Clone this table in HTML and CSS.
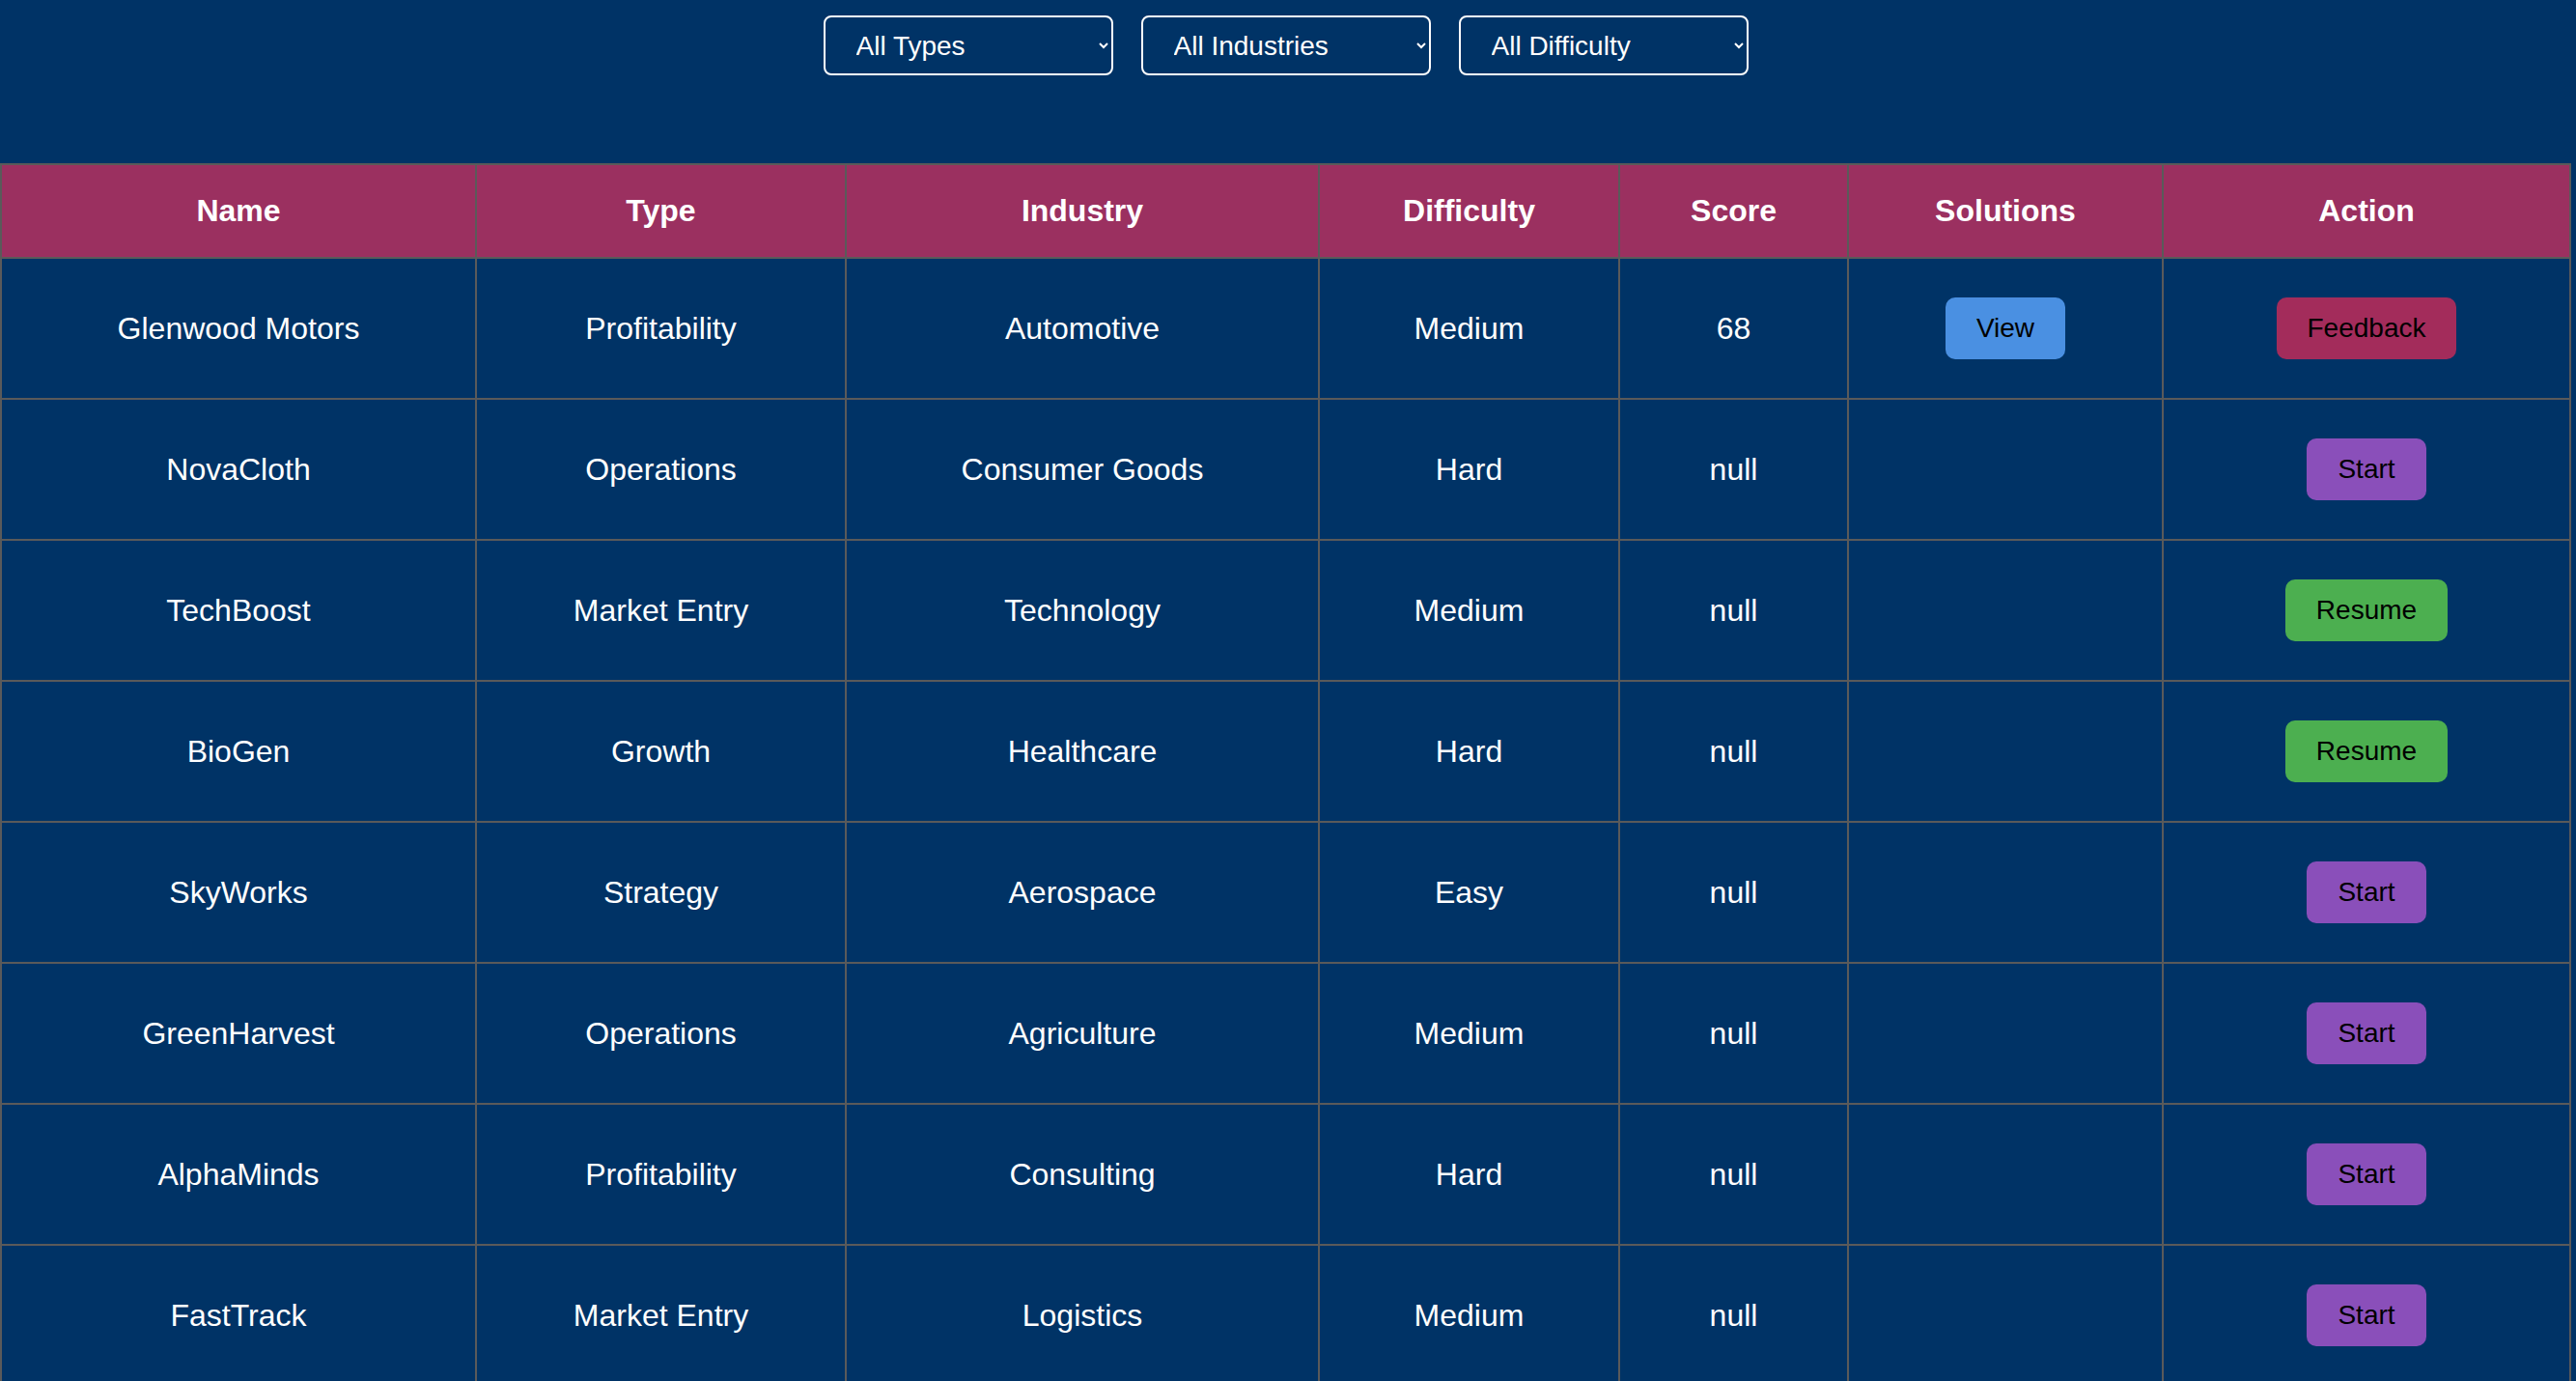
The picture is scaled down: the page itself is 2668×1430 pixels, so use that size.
FILE: index.html
```html
<!DOCTYPE html>
<html lang="en">
<head>
<meta charset="utf-8">
<title>Cases</title>
<link rel="stylesheet" href="styles.css">
</head>
<body>
<div class="page">
  <div class="filters">
    <select class="filter">
      <option>All Types</option>
      <option>Profitability</option>
      <option>Operations</option>
      <option>Market Entry</option>
      <option>Growth</option>
      <option>Strategy</option>
    </select>
    <select class="filter">
      <option>All Industries</option>
      <option>Automotive</option>
      <option>Consumer Goods</option>
      <option>Technology</option>
    </select>
    <select class="filter">
      <option>All Difficulty</option>
      <option>Easy</option>
      <option>Medium</option>
      <option>Hard</option>
    </select>
  </div>

  <table class="cases">
    <colgroup>
      <col class="c-name">
      <col class="c-type">
      <col class="c-industry">
      <col class="c-diff">
      <col class="c-score">
      <col class="c-sol">
      <col class="c-action">
    </colgroup>
    <thead>
      <tr>
        <th>Name</th>
        <th>Type</th>
        <th>Industry</th>
        <th>Difficulty</th>
        <th>Score</th>
        <th>Solutions</th>
        <th>Action</th>
      </tr>
    </thead>
    <tbody>
      <tr>
        <td>Glenwood Motors</td>
        <td>Profitability</td>
        <td>Automotive</td>
        <td>Medium</td>
        <td>68</td>
        <td><button class="btn btn-view">View</button></td>
        <td><button class="btn btn-feedback">Feedback</button></td>
      </tr>
      <tr>
        <td>NovaCloth</td>
        <td>Operations</td>
        <td>Consumer Goods</td>
        <td>Hard</td>
        <td>null</td>
        <td></td>
        <td><button class="btn btn-start">Start</button></td>
      </tr>
      <tr>
        <td>TechBoost</td>
        <td>Market Entry</td>
        <td>Technology</td>
        <td>Medium</td>
        <td>null</td>
        <td></td>
        <td><button class="btn btn-resume">Resume</button></td>
      </tr>
      <tr>
        <td>BioGen</td>
        <td>Growth</td>
        <td>Healthcare</td>
        <td>Hard</td>
        <td>null</td>
        <td></td>
        <td><button class="btn btn-resume">Resume</button></td>
      </tr>
      <tr>
        <td>SkyWorks</td>
        <td>Strategy</td>
        <td>Aerospace</td>
        <td>Easy</td>
        <td>null</td>
        <td></td>
        <td><button class="btn btn-start">Start</button></td>
      </tr>
      <tr>
        <td>GreenHarvest</td>
        <td>Operations</td>
        <td>Agriculture</td>
        <td>Medium</td>
        <td>null</td>
        <td></td>
        <td><button class="btn btn-start">Start</button></td>
      </tr>
      <tr>
        <td>AlphaMinds</td>
        <td>Profitability</td>
        <td>Consulting</td>
        <td>Hard</td>
        <td>null</td>
        <td></td>
        <td><button class="btn btn-start">Start</button></td>
      </tr>
      <tr>
        <td>FastTrack</td>
        <td>Market Entry</td>
        <td>Logistics</td>
        <td>Medium</td>
        <td>null</td>
        <td></td>
        <td><button class="btn btn-start">Start</button></td>
      </tr>
    </tbody>
  </table>
</div>
</body>
</html>
```
FILE: styles.css
```css
html, body {
  margin: 0;
  padding: 0;
  background: #003366;
}

body {
  font-family: "Liberation Sans", Arial, sans-serif;
  color: #ffffff;
}

.page {
  padding-right: 5px;
}

.filters {
  display: flex;
  justify-content: center;
  gap: 29px;
  padding-top: 16px;
  margin-bottom: 91px;
}

.filter {
  width: 300px;
  height: 62px;
  box-sizing: border-box;
  background-color: #003366;
  color: #ffffff;
  border: 2px solid #ffffff;
  border-radius: 8px;
  font-family: "Liberation Sans", Arial, sans-serif;
  font-size: 28px;
  padding: 0 28px;
}

.cases {
  width: 100%;
  border-collapse: collapse;
  table-layout: fixed;
  font-size: 32px;
}

.c-name { width: 492px; }
.c-type { width: 383px; }
.c-industry { width: 490px; }
.c-diff { width: 311px; }
.c-score { width: 237px; }
.c-sol { width: 326px; }
.c-action { width: auto; }

.cases th,
.cases td {
  border: 2px solid #5a5a5a;
  text-align: center;
  vertical-align: middle;
  padding: 30px 10px;
}

.cases th {
  background: #9b3060;
  font-weight: bold;
  padding: 29px 10px;
}

.cases td {
  height: 84px;
  padding: 30px 10px;
  box-sizing: content-box;
}

.btn {
  font-family: "Liberation Sans", Arial, sans-serif;
  font-size: 28px;
  color: #000000;
  border: none;
  border-radius: 10px;
  padding: 16px 32px;
  line-height: 32px;
  cursor: pointer;
}

.btn-view { background: #4a90e2; }
.btn-feedback { background: #a32c5b; }
.btn-resume { background: #4caf50; }
.btn-start { background: #8a4fba; }
```
